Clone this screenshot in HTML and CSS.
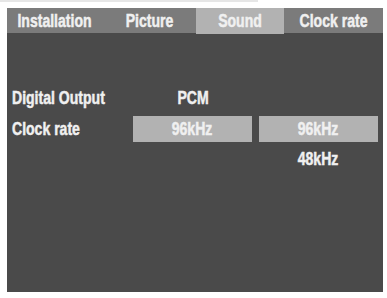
FILE: index.html
```html
<!DOCTYPE html>
<html>
<head>
<meta charset="utf-8">
<link rel="stylesheet" href="styles.css">
</head>
<body>
<div class="topline"></div>
<div class="panel">
  <div class="tabs">
    <div class="tab"><span class="t">Installation</span></div>
    <div class="tab"><span class="t">Picture</span></div>
    <div class="tab active"><span class="t">Sound</span></div>
    <div class="tab"><span class="t">Clock rate</span></div>
  </div>
  <div class="content">
    <div class="grid">
      <div class="label r1"><span class="t tl">Digital Output</span></div>
      <div class="value r1 c1"><span class="t">PCM</span></div>
      <div class="label r2"><span class="t tl">Clock rate</span></div>
      <div class="value box r2 c1"><span class="t">96kHz</span></div>
      <div class="value box r2 c2"><span class="t">96kHz</span></div>
      <div class="value r3 c2"><span class="t">48kHz</span></div>
    </div>
  </div>
</div>
</body>
</html>
```
FILE: styles.css
```css
html, body {
  margin: 0;
  padding: 0;
  background: #ffffff;
}
body {
  width: 387px;
  height: 298px;
  font-family: "Liberation Sans", Arial, sans-serif;
  font-weight: bold;
  font-size: 18px;
  color: #f0f0f0;
}
.t {
  display: inline-block;
  white-space: nowrap;
  transform: scaleX(0.78);
  transform-origin: center;
  -webkit-text-stroke: 0.5px currentColor;
}
.t.tl {
  transform-origin: left center;
}
.topline {
  width: 258px;
  height: 2px;
  background: #e6e6e6;
}
.panel {
  margin-left: 7px;
  margin-top: 6px;
  width: 376px;
  height: 284px;
  background: #4a4a4a;
  display: flex;
  flex-direction: column;
}
.tabs {
  display: grid;
  grid-template-columns: 96px 93px 88px 99px;
  height: 25px;
  background: #7b7b7b;
}
.tab {
  display: flex;
  align-items: center;
  justify-content: center;
  line-height: 25px;
  padding-top: 1px;
}
.tab.active {
  background: #b2b2b2;
}
.content {
  padding-top: 52px;
}
.grid {
  display: grid;
  grid-template-columns: 126px 119px 7px 119px;
  grid-template-rows: 26px 26px 26px;
  row-gap: 5px;
}
.label {
  grid-column: 1;
  padding-left: 5px;
  display: flex;
  align-items: center;
  white-space: nowrap;
}
.value {
  display: flex;
  align-items: center;
  justify-content: center;
}
.r1 { grid-row: 1; }
.r2 { grid-row: 2; }
.r3 { grid-row: 3; margin-top: -1px; }
.c1 { grid-column: 2; }
.c2 { grid-column: 4; }
.box {
  background: #b2b2b2;
}
```
